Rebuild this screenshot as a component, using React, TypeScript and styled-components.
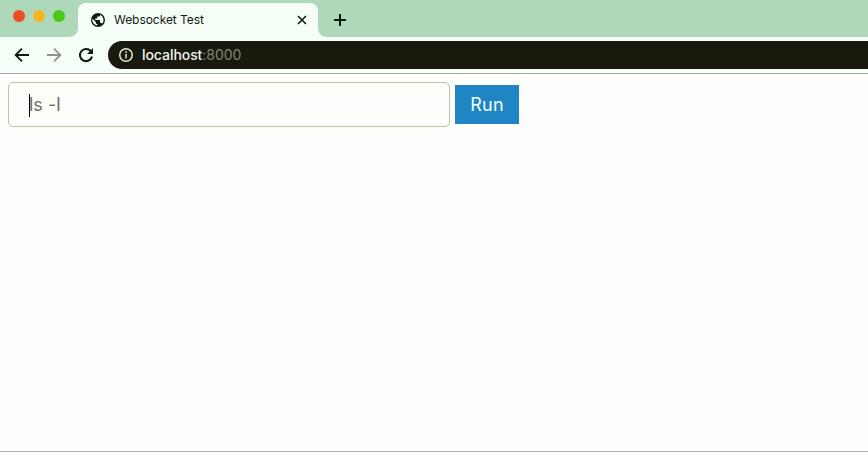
import React from "react";
import styled, { createGlobalStyle } from "styled-components";

const Global = createGlobalStyle`
  * { box-sizing: border-box; }
  html, body { margin: 0; padding: 0; background: #fdfdfb; }
  body { font-family: Inter, "Liberation Sans", sans-serif; overflow: hidden; }
`;

const Window = styled.div`
  width: 868px; height: 452px; display: flex; flex-direction: column;
  background: #fdfdfb; border-bottom: 1px solid #adadad;
`;

const TabStrip = styled.header`
  height: 37px; flex: none; display: flex; align-items: flex-start; background: #aed8ba;
`;

const Lights = styled.div`
  width: 78px; padding: 10px 0 0 13px; display: flex; gap: 8px;
`;

const Light = styled.span<{ $color: string }>`
  width: 12px; height: 12px; border-radius: 50%; background: ${(p) => p.$color};
`;

const Tab = styled.div`
  position: relative; width: 240px; height: 34px; margin-top: 3px; padding: 0 10px 0 12px;
  display: flex; align-items: center; border-radius: 8px 8px 0 0; background: #f5fff8;
  &::before, &::after {
    content: ""; position: absolute; bottom: 0; width: 8px; height: 8px;
  }
  &::before { left: -8px; background: radial-gradient(circle at 0 0, transparent 7.5px, #f5fff8 8px); }
  &::after { right: -8px; background: radial-gradient(circle at 100% 0, transparent 7.5px, #f5fff8 8px); }
`;

const TabTitle = styled.span`
  flex: 1; margin-left: 8px; font-size: 12px; line-height: 16px; letter-spacing: -0.05px;
  color: #101a10; white-space: nowrap;
`;

const NewTab = styled.div`
  display: flex; margin: 12px 0 0 14px;
`;

const Toolbar = styled.nav`
  height: 37px; flex: none; display: flex; align-items: center; padding-left: 14px;
  background: #f5fff8; border-bottom: 1px solid #a3a39f;
`;

const NavIcons = styled.div`
  width: 94px; display: flex; gap: 16px;
`;

const Address = styled.div`
  flex: 1; height: 28px; padding-left: 10px; display: flex; align-items: center;
  border-radius: 14px 0 0 14px; background: #181a0e; color: #f4f4ec;
`;

const Url = styled.span`
  margin-left: 8px; font-size: 14px; line-height: 18px; letter-spacing: -0.06px;
  font-weight: 500; white-space: nowrap;
`;

const Port = styled.span`
  color: #84847a; font-weight: 400;
`;

const Page = styled.main`
  flex: 1; padding: 8px; display: flex; align-items: flex-start; gap: 5px;
`;

const Command = styled.div`
  width: 442px; height: 45px; padding: 1px 20px 0; display: flex; align-items: center;
  border: 1px solid #c0c0a6; border-radius: 5px; color: #6e6e62;
  font-size: 18px; line-height: 24px;
`;

const Caret = styled.span`
  width: 1px; height: 23px; margin-right: -1px; background: #000;
`;

const Run = styled.button`
  width: 64px; height: 39px; margin: 3px 0 0; padding: 1px 0 0; border: 0;
  background: #1f85c4; color: #f6fdff; font: 400 18px/24px Inter, sans-serif; letter-spacing: 0.2px;
`;

const Globe = () => (
  <svg width="16" height="16" viewBox="0 0 24 24" fill="#101a10">
    <path d="M12 1.5a10.5 10.5 0 1 0 0 21 10.5 10.5 0 0 0 0-21Zm-1 18.8A8.4 8.4 0 0 1 3.7 10.2L8.7 15v1c0 1.2 1 2.1 2.3 2.1v2.2Zm7.1-2.7a2.1 2.1 0 0 0-2-1.5h-1V13c0-.6-.5-1-1-1H7.8V9.9h2.1c.6 0 1-.5 1-1V6.800h2.1c1.2 0 2.1-1 2.1-2.1v-.4a8.4 8.4 0 0 1 3 13.3Z" />
  </svg>
);

const Close = () => (
  <svg width="12" height="12" viewBox="0 0 12 12" stroke="#101a10" strokeWidth="1.6">
    <path d="M2 2l8 8M10 2l-8 8" />
  </svg>
);

const Plus = () => (
  <svg width="16" height="16" viewBox="0 0 16 16" stroke="#101a10" strokeWidth="2">
    <path d="M8 2v12M2 8h12" />
  </svg>
);

const Arrow = ({ forward = false }: { forward?: boolean }) => (
  <svg width="16" height="16" viewBox="0 0 16 16" fill="none" stroke={forward ? "#8c9588" : "#101a10"} strokeWidth="1.8">
    <path d={forward ? "M1 8h13M8 1.6L14.4 8 8 14.4" : "M15 8H2M8 1.6L1.6 8 8 14.4"} />
  </svg>
);

const Reload = () => (
  <svg width="16" height="16" viewBox="0 0 16 16" fill="none">
    <path d="M12.7 4A6.100 6.100 0 1 0 14 9.5" stroke="#101a10" strokeWidth="2" />
    <path d="M15 1v6H9Z" fill="#101a10" />
  </svg>
);

const Info = () => (
  <svg width="16" height="16" viewBox="0 0 16 16" fill="none" stroke="#e8e8dc" strokeWidth="1.5">
    <circle cx="8" cy="8" r="6.25" />
    <path d="M8 7v4.5M8 4.3v1.6" />
  </svg>
);

export default function App() {
  return (
    <Window>
      <Global />
      <TabStrip>
        <Lights>
          <Light $color="#ed4b25" />
          <Light $color="#f7b51c" />
          <Light $color="#48c814" />
        </Lights>
        <Tab>
          <Globe />
          <TabTitle>Websocket Test</TabTitle>
          <Close />
        </Tab>
        <NewTab><Plus /></NewTab>
      </TabStrip>
      <Toolbar>
        <NavIcons>
          <Arrow />
          <Arrow forward />
          <Reload />
        </NavIcons>
        <Address>
          <Info />
          <Url>localhost<Port>:8000</Port></Url>
        </Address>
      </Toolbar>
      <Page>
        <Command><Caret />ls -l</Command>
        <Run>Run</Run>
      </Page>
    </Window>
  );
}
